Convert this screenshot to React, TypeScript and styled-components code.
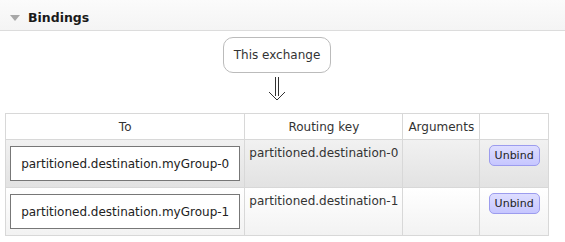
import React from "react";
import styled, { createGlobalStyle } from "styled-components";

const Global = createGlobalStyle`
  html, body { margin: 0; padding: 0; background: #fff; }
  body { font-family: "DejaVu Sans", Verdana, sans-serif; font-size: 12px; color: #484848; }
`;

const Section = styled.div`
  width: 565px;
`;

const SectionHeader = styled.div`
  height: 31px;
  box-sizing: border-box;
  display: flex;
  align-items: center;
  gap: 8px;
  padding: 4px 0 0 10px;
  background: linear-gradient(#fbfbfb, #f4f4f4);
  border-bottom: 1px solid #dcdcdc;
  font-weight: bold;
  font-size: 12.5px;
  color: #1a1a1a;
`;

const Triangle = styled.span`
  width: 0;
  height: 0;
  border-left: 5px solid transparent;
  border-right: 5px solid transparent;
  border-top: 6px solid #a8a8a8;
  margin-top: 1px;
`;

const Body = styled.div`
  width: 544px;
  padding: 6px 0 0 5px;
  display: flex;
  flex-direction: column;
  align-items: center;
`;

const ExchangeBox = styled.div`
  border: 1px solid #bbb;
  border-radius: 10px;
  padding: 10px 10px;
  font-size: 12px;
  color: #333;
  background: #fff;
`;

const ArrowIcon = styled.svg`
  display: block;
  margin-top: 4px;
`;

const Table = styled.table`
  width: 544px;
  border-collapse: collapse;
  margin-top: 12px;
`;

const Th = styled.th<{ $w: number }>`
  width: ${(p) => p.$w}px;
  height: 26px;
  padding: 0 4px;
  font-weight: normal;
  font-size: 12px;
  color: #333;
  border: 1px solid #d8d8d8;
  background: #fff;
  text-align: center;
  box-sizing: border-box;
`;

const Tr = styled.tr<{ $alt: boolean }>`
  background: ${(p) =>
    p.$alt ? "linear-gradient(#ffffff, #f2f2f2)" : "linear-gradient(#f1f1f1, #e2e2e2)"};
`;

const Td = styled.td<{ $center?: boolean }>`
  height: 48px;
  padding: 6px 4px 4px 4px;
  border: 1px solid #d8d8d8;
  vertical-align: top;
  text-align: ${(p) => (p.$center ? "center" : "left")};
  font-size: 12px;
  color: #333;
  white-space: nowrap;
  box-sizing: border-box;
`;

const KeyText = styled.div`
  padding-top: 0;
`;

const Dest = styled.div`
  border: 1px solid #777;
  background: #fff;
  height: 35px;
  box-sizing: border-box;
  display: flex;
  align-items: center;
  justify-content: center;
  color: #222;
`;

const UnbindButton = styled.button`
  display: inline-block;
  vertical-align: top;
  margin-top: -1px;
  font-family: inherit;
  font-size: 11px;
  color: #222;
  background: linear-gradient(#dedeff, #c6c6ff);
  border: 1px solid #9c9cee;
  border-radius: 5px;
  padding: 0 5px;
  height: 21px;
`;

const rows = [
  { to: "partitioned.destination.myGroup-0", key: "partitioned.destination-0" },
  { to: "partitioned.destination.myGroup-1", key: "partitioned.destination-1" },
];

export default function App() {
  return (
    <>
      <Global />
      <Section>
        <SectionHeader>
          <Triangle />
          Bindings
        </SectionHeader>
        <Body>
          <ExchangeBox>This exchange</ExchangeBox>
          <ArrowIcon width="20" height="24" viewBox="0 0 20 24" fill="none" stroke="#333" strokeWidth="1">
            <path d="M8.5 0 V19 M11.5 0 V19 M2 15 L10 23 L18 15" />
          </ArrowIcon>
          <Table>
            <thead>
              <tr>
                <Th $w={240}>To</Th>
                <Th $w={158}>Routing key</Th>
                <Th $w={77}>Arguments</Th>
                <Th $w={69}></Th>
              </tr>
            </thead>
            <tbody>
              {rows.map((r, i) => (
                <Tr key={r.to} $alt={i % 2 === 1}>
                  <Td>
                    <Dest>{r.to}</Dest>
                  </Td>
                  <Td>
                    <KeyText>{r.key}</KeyText>
                  </Td>
                  <Td></Td>
                  <Td $center>
                    <UnbindButton>Unbind</UnbindButton>
                  </Td>
                </Tr>
              ))}
            </tbody>
          </Table>
        </Body>
      </Section>
    </>
  );
}
